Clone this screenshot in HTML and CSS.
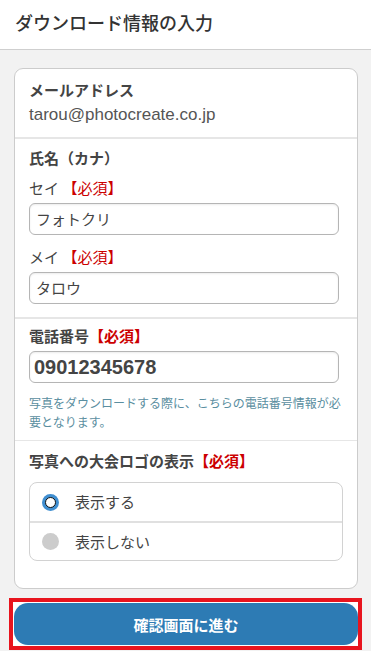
FILE: index.html
```html
<!DOCTYPE html>
<html lang="ja">
<head>
<meta charset="utf-8">
<title>ダウンロード情報の入力</title>
<link rel="stylesheet" href="styles.css">
</head>
<body>
<header class="header">
  <h1 class="title">ダウンロード情報の入力</h1>
</header>
<main class="main">
  <div class="card">
    <section class="section s1">
      <div class="label">メールアドレス</div>
      <div class="email">tarou@photocreate.co.jp</div>
    </section>
    <section class="section s2">
      <div class="label">氏名（カナ）</div>
      <div class="sublabel">セイ <span class="req">【必須】</span></div>
      <div class="input">フォトクリ</div>
      <div class="sublabel second">メイ <span class="req">【必須】</span></div>
      <div class="input">タロウ</div>
    </section>
    <section class="section s3">
      <div class="label">電話番号<span class="req bold">【必須】</span></div>
      <div class="input tel">09012345678</div>
      <p class="note">写真をダウンロードする際に、こちらの電話番号情報が必要となります。</p>
    </section>
    <section class="section s4">
      <div class="label">写真への大会ロゴの表示<span class="req bold">【必須】</span></div>
      <div class="radios">
        <div class="radio-row">
          <span class="radio checked"></span>
          <span class="radio-text">表示する</span>
        </div>
        <div class="radio-row">
          <span class="radio"></span>
          <span class="radio-text">表示しない</span>
        </div>
      </div>
    </section>
  </div>
  <div class="btn-wrap">
    <button class="btn">確認画面に進む</button>
  </div>
</main>
</body>
</html>
```

FILE: styles.css
```css
* { box-sizing: border-box; }
html, body {
  margin: 0;
  padding: 0;
}
body {
  background: #f2f2f2;
  font-family: "Noto Sans CJK JP", "Noto Sans", sans-serif;
  color: #3c3c3c;
}
.header {
  background: #fff;
  height: 50px;
  border-bottom: 1px solid #cfcfcf;
  padding: 0 15px;
  display: flex;
  align-items: center;
}
.title {
  margin: 0;
  font-size: 18px;
  font-weight: 500;
  line-height: 24px;
  color: #333;
  margin-top: -5px;
}
.main {
  padding: 18px 0 0;
}
.card {
  margin: 0 13px 0 14px;
  background: #fff;
  border: 1px solid #cccccc;
  border-radius: 9px;
}
.section {
  padding: 0 14px;
}
.section + .section {
  border-top: 2px solid #e6e6e6;
}
.label {
  font-size: 15px;
  font-weight: 700;
  line-height: 22px;
  color: #444;
}
.req {
  color: #cc0000;
  font-weight: 400;
}
.req.bold { font-weight: 700; }
.s1 { padding-top: 10px; padding-bottom: 11px; }
.email {
  margin-top: 3px;
  font-family: "Liberation Sans", Arial, sans-serif;
  font-size: 17px;
  line-height: 22px;
  color: #555;
}
.s2 { padding-top: 8px; padding-bottom: 13px; }
.sublabel {
  margin-top: 8px;
  font-size: 15px;
  line-height: 22px;
  color: #444;
}
.sublabel.second { margin-top: 11px; }
.input {
  margin-top: 4px;
  width: calc(100% - 4px);
  height: 32px;
  border: 1px solid #b5b5b5;
  border-radius: 6px;
  padding: 0 6px;
  font-size: 15px;
  line-height: 30px;
  color: #444;
  box-shadow: inset 0 1px 2px rgba(0,0,0,0.08);
}
.s3 { padding-top: 6px; padding-bottom: 9px; }
.input.tel {
  font-family: "Liberation Sans", Arial, sans-serif;
  font-size: 20px;
  font-weight: 700;
  color: #444;
  padding-left: 4px;
  height: 32px;
}
.note {
  margin: 10px 0 0;
  font-size: 12px;
  line-height: 19px;
  color: #5a8ea0;
}
.s4 {
  border-top-width: 1px !important;
  padding-top: 9px;
  padding-bottom: 27px;
}
.radios {
  margin-top: 10px;
  border: 1px solid #d2d2d2;
  border-radius: 8px;
}
.radio-row {
  display: flex;
  align-items: center;
  height: 38px;
  padding-left: 12px;
}
.radio-row + .radio-row {
  border-top: 2px solid #e0e0e0;
  height: 39px;
}
.radio {
  width: 17px;
  height: 17px;
  border-radius: 50%;
  background: #cccccc;
  flex: none;
  display: flex;
  align-items: center;
  justify-content: center;
}
.radio.checked {
  background: #3f8ed0;
}
.radio.checked::after {
  content: "";
  width: 9px;
  height: 9px;
  border-radius: 50%;
  background: #fff;
  border: 1.5px solid #111;
}
.radio-text {
  margin-left: 16px;
  font-size: 15px;
  line-height: 22px;
  color: #444;
}
.btn-wrap {
  margin: 9px 9px 0 9px;
  border: 4px solid #e8141e;
  padding: 1px 0 1px 1px;
  background: #fff;
}
.btn {
  display: block;
  width: 100%;
  height: 42px;
  border: none;
  border-radius: 14px;
  background: #2d7bb4;
  color: #fff;
  font-family: "Noto Sans CJK JP", "Noto Sans", sans-serif;
  font-size: 15px;
  font-weight: 700;
  padding: 0;
}
```
